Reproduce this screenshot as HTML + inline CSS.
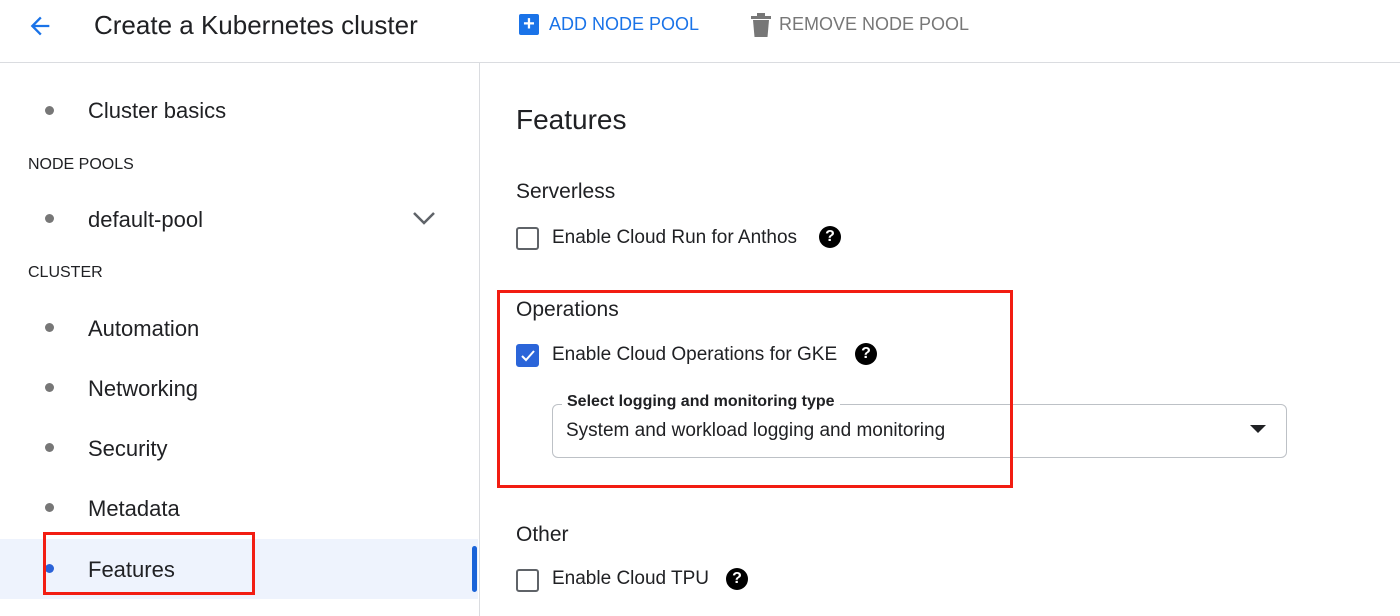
<!DOCTYPE html>
<html><head><style>
*{margin:0;padding:0;box-sizing:border-box}
body{width:1400px;height:616px;background:#fff;font-family:"Liberation Sans",Arial,sans-serif;color:#202124;position:relative;overflow:hidden}
.a{position:absolute;white-space:nowrap}
.dot{position:absolute;width:9px;height:9px;border-radius:50%;background:#777}
.it{font-size:22px}
.sec{font-size:16px;color:#202124}
.cb{position:absolute;width:23px;height:23px;border:2px solid #5f6368;border-radius:3px}
.lab{font-size:19px}
.q{position:absolute;width:22px;height:22px;border-radius:50%;background:#000;color:#fff;font-size:16px;font-weight:bold;text-align:center;line-height:22px}
</style></head><body>
<svg class="a" style="left:26px;top:12px" width="28" height="28" viewBox="0 0 24 24"><path d="M20 11H7.83l5.59-5.59L12 4l-8 8 8 8 1.41-1.41L7.83 13H20v-2z" fill="#1a73e8"/></svg>
<div class="a" style="left:94px;top:10px;font-size:26px">Create a Kubernetes cluster</div>
<div class="a" style="left:519px;top:14px;width:20px;height:21px;background:#1a73e8;border-radius:2px;color:#fff;font-weight:bold;font-size:20px;line-height:20px;text-align:center">+</div>
<div class="a" style="left:549px;top:14px;font-size:18px;color:#1a73e8">ADD NODE POOL</div>
<svg class="a" style="left:750px;top:13px" width="22" height="24" viewBox="0 0 22 24"><rect x="1" y="3" width="20" height="3" fill="#777"/><rect x="7" y="0" width="8" height="3" fill="#777"/><path d="M3 7h16l-1.5 17h-13z" fill="#777"/></svg>
<div class="a" style="left:779px;top:14px;font-size:18px;color:#777">REMOVE NODE POOL</div>
<div class="a" style="left:0;top:62px;width:1400px;height:1px;background:#dadce0"></div>
<div class="a" style="left:479px;top:63px;width:1px;height:553px;background:#dadce0"></div>

<div class="dot" style="left:45px;top:106px"></div><div class="a it" style="left:88px;top:98px">Cluster basics</div>
<div class="a sec" style="left:28px;top:156px">NODE POOLS</div>
<div class="dot" style="left:45px;top:214px"></div><div class="a it" style="left:88px;top:207px">default-pool</div>
<svg class="a" style="left:412px;top:210px" width="24" height="16" viewBox="0 0 24 16"><path d="M2 3l10 10 10-10" stroke="#5f6368" stroke-width="2.5" fill="none"/></svg>
<div class="a sec" style="left:28px;top:264px">CLUSTER</div>
<div class="dot" style="left:45px;top:323px"></div><div class="a it" style="left:88px;top:316px">Automation</div>
<div class="dot" style="left:45px;top:383px"></div><div class="a it" style="left:88px;top:376px">Networking</div>
<div class="dot" style="left:45px;top:443px"></div><div class="a it" style="left:88px;top:436px">Security</div>
<div class="dot" style="left:45px;top:503px"></div><div class="a it" style="left:88px;top:496px">Metadata</div>
<div class="a" style="left:0;top:539px;width:478px;height:60px;background:#eef3fd"></div>
<div class="a" style="left:472px;top:546px;width:5px;height:46px;background:#1a63d8;border-radius:3px"></div>
<div class="dot" style="left:45px;top:564px;background:#2a62d8"></div><div class="a it" style="left:88px;top:557px">Features</div>
<div class="a" style="left:43px;top:532px;width:212px;height:63px;border:3px solid #f21d12"></div>

<div class="a" style="left:516px;top:104px;font-size:28px">Features</div>
<div class="a" style="left:516px;top:180px;font-size:21px">Serverless</div>
<div class="cb" style="left:516px;top:227px"></div>
<div class="a lab" style="left:552px;top:227px">Enable Cloud Run for Anthos</div>
<div class="q" style="left:819px;top:226px">?</div>

<div class="a" style="left:516px;top:298px;font-size:21px">Operations</div>
<div class="cb" style="left:516px;top:344px;background:#2b65d9;border-color:#2b65d9"></div>
<svg class="a" style="left:519px;top:347px" width="18" height="18" viewBox="0 0 18 18"><path d="M3 9l4 4 8-9" stroke="#fff" stroke-width="2" fill="none"/></svg>
<div class="a lab" style="left:552px;top:344px">Enable Cloud Operations for GKE</div>
<div class="q" style="left:855px;top:343px">?</div>
<div class="a" style="left:552px;top:404px;width:735px;height:54px;border:1px solid #bdc1c6;border-radius:6px"></div>
<div class="a" style="left:562px;top:393px;background:#fff;padding:0 5px;font-size:16px;font-weight:bold;color:#202124">Select logging and monitoring type</div>
<div class="a" style="left:566px;top:420px;font-size:19px">System and workload logging and monitoring</div>
<svg class="a" style="left:1250px;top:425px" width="16" height="10"><path d="M0 0h16L8 8z" fill="#202124"/></svg>
<div class="a" style="left:497px;top:290px;width:516px;height:198px;border:3px solid #f21d12"></div>

<div class="a" style="left:516px;top:523px;font-size:21px">Other</div>
<div class="cb" style="left:516px;top:569px"></div>
<div class="a lab" style="left:552px;top:568px">Enable Cloud TPU</div>
<div class="q" style="left:726px;top:568px">?</div>
</body></html>
